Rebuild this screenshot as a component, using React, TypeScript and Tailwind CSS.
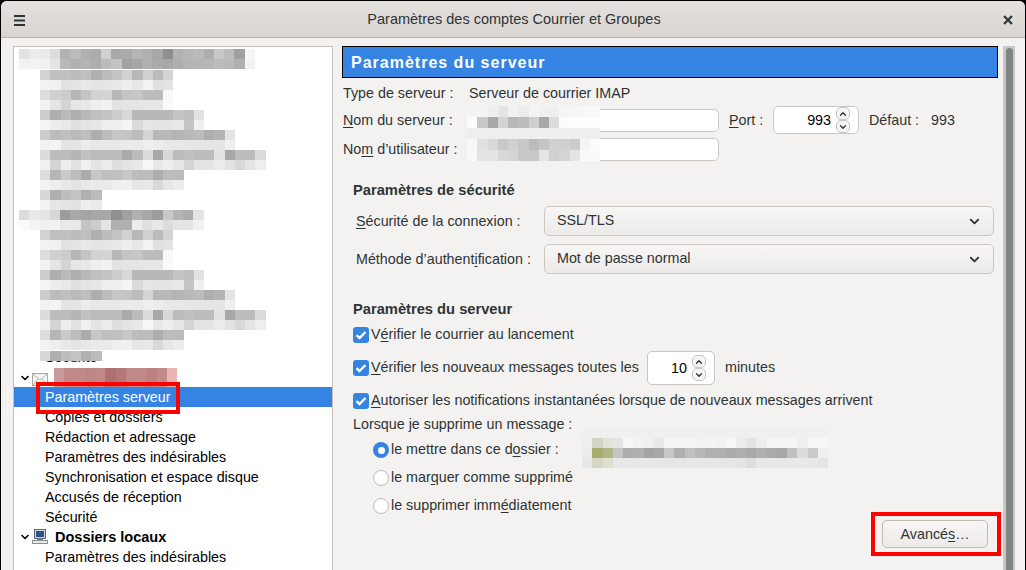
import React from 'react';
import { ChevronDown, ChevronUp } from 'lucide-react';

// pixelated (blurred out) parts of the screenshot, one grey per cell
const ROW_0 = ['e2eceadcb2bbb0add0a8aab4b0a88fb2b6baadc8bca0f6', 'f2f3f1e4b8b2b4aebcc4a2a6b0aaa8aeb4b6b6bcbab0f2'];
const ROW_1 = ['d2c0c0bcc0b0bcc4d2b8d0bcd4', 'f2f0e2e4e8e4e6e8eee8f2e0e4'];
const ROW_2 = ['dcd0ccb6c4d2d4b8c4c6bcbcf8', 'f2e4d4e6e8eef2e2e4e4e6e6fa'];
const ROW_3 = ['ccaebaaeb8c0c4ccd8b8b8b8b8c4c0e2', 'f4ece8e0e4e6eeeef4dae6e4e4e8c4f0'];
const ROW_4 = ['ccbcc0babeaebcc6c4bcd4b8b8b4b8bcaeb4e4', 'f2f4e4e4ece8e8e8eaeaeeece8e8e6e6e4e4f0'];
const ROW_5 = ['dcbcbcb6c2bcbcbcaabcdca8d8bcc0bcbce2a8bcbcdc', 'f0d4eee2f0e4ecdee4e8f6e8eee6d4e4e4ece2d8e4ee'];
const ROW_6 = ['dcb6cabcacc6c0c0c8bcbcaebcbc', 'f2eee8e4e8eaeaeef0e6e8d8e6ec'];
const ROW_7 = ['d8b0bec4b0bc', 'f2e6e4e2eeea'];
const ROW_8 = ['dce8e4d89ca8a4a8a890a0b0a89cc8b4ace4', 'faf4f0f2eae8c4cce4b0b0ece0e8dce4e4f2'];

const SERVER_CELLS = [
  'f4f4eee4f2ecf4f0eef6f6f8f8',
  'fcc8a8d4b8bcd0a8dcfcfefefe',
  'eeeeeeeeeeeeeeeeeeeeeeeeee',
  'f8e0d8c8d0c8bcc4d0d0ccf4fc',
  'f8e4e4d8d4c8c8e4d0d4e4f8fa',
];

const FOLDER_CELLS = [
  'f0f0f0f0f0f0f0f0f0f0f0f0f0f0f0f0f0f0f0f0f0f0f0f0',
  'eed4e2e4f6f2f0e8f5f5f5f2f4f2f6ece4eef5f5f5eef6f6',
  'eca8acc4acb0a4a8c8b0c0b8b0b0aaaeaab0aaa8c0dccaee',
  'e8d8e0e8e8e8e8e6e6e6e6e6e6e6e6e4dee8e8e8e8e8e8e4',
];

// the only coloured cells of the folder name
const FOLDER_TINTS: Record<string, string> = {
  '1-1': '#d2d4c4',
  '1-2': '#e2e4d6',
  '2-1': '#a8ac6c',
  '2-2': '#b4b48c',
  '3-1': '#d6d6c4',
  '3-2': '#e0dfd0',
};

const ACCOUNT_REDS = ['#c99a9a', '#c08888', '#c08a8a', '#bd8585', '#c08888', '#b07070', '#b57878', '#c08888', '#c08a8a', '#be8080', '#c48a8a', '#ecb4b4'];

const greys = (row: string) => (row.match(/../g) ?? []).map((g) => `#${g}${g}${g}`);

const Cells = ({ colors, cell = 'h-[10px]' }: { colors: string[]; cell?: string }) => (
  <div className="flex">
    {colors.map((color, i) => (
      <div key={i} className={`w-[10.25px] ${cell}`} style={{ background: color }} />
    ))}
  </div>
);

const Blurred = ({ rows, indent }: { rows: string[]; indent: boolean }) => (
  <div className={indent ? 'h-5 pt-[3px] pl-[26px]' : 'h-5 pt-[3px] pl-[5px]'}>
    {rows.map((row, i) => (
      <Cells key={i} colors={greys(row)} />
    ))}
  </div>
);

const Key = ({ children }: { children: React.ReactNode }) => (
  <span className="underline underline-offset-2 decoration-1">{children}</span>
);

const TreeRow = ({ children, selected }: { children: React.ReactNode; selected?: boolean }) => (
  <div className={selected ? 'h-5 pl-[31px] leading-5 bg-[#3584e4] text-white' : 'h-5 pl-[31px] leading-5 text-black'}>
    {children}
  </div>
);

const Stepper = ({ value, className }: { value: string; className: string }) => (
  <div className={`flex items-center justify-end rounded-[5px] border border-[#c9c5bf] bg-white ${className}`}>
    <span className="pt-[2px] text-black">{value}</span>
    <div className="ml-[5px] mr-2 flex flex-col">
      <div className="flex h-[13px] w-[14px] items-center justify-center rounded-[5px] border border-[#c9c5bf] bg-[#f6f5f4]">
        <ChevronUp size={10} strokeWidth={3} className="text-[#2e3436]" />
      </div>
      <div className="flex h-[13px] w-[14px] items-center justify-center rounded-[5px] border border-[#c9c5bf] bg-[#f6f5f4]">
        <ChevronDown size={10} strokeWidth={3} className="text-[#2e3436]" />
      </div>
    </div>
  </div>
);

const Check = () => (
  <div className="flex h-4 w-4 shrink-0 items-center justify-center rounded-[3px] bg-[#3584e4]">
    <svg width="12" height="10" viewBox="0 0 12 10">
      <path d="M1.5 5.2 L4.5 8 L10.5 2" fill="none" stroke="white" strokeWidth="2.4" />
    </svg>
  </div>
);

const Radio = ({ on }: { on?: boolean }) =>
  on ? (
    <div className="flex h-4 w-4 shrink-0 items-center justify-center rounded-full bg-[#3584e4]">
      <div className="h-[7px] w-[7px] rounded-full bg-white" />
    </div>
  ) : (
    <div className="h-4 w-4 shrink-0 rounded-full border border-[#c2bdb7] bg-white" />
  );

const Dropdown = ({ value }: { value: string }) => (
  <div className="flex h-[30px] w-[450px] items-center justify-between rounded-[5px] border border-[#cdc7c2] bg-gradient-to-b from-[#f7f6f5] to-[#edebe9] pl-3 pr-[11px]">
    <span>{value}</span>
    <ChevronDown size={15} strokeWidth={3} className="text-[#2e3436]" />
  </div>
);

const MailIcon = () => (
  <svg width="16" height="13" viewBox="0 0 16 13">
    <rect x="0.5" y="0.5" width="15" height="12" fill="#f4f4f2" stroke="#a8a8a4" />
    <path d="M1 1 L8 7 L15 1 M1 12 L6 6 M15 12 L10 6" fill="none" stroke="#b4b4b0" />
  </svg>
);

const ComputerIcon = () => (
  <svg width="16" height="16" viewBox="0 0 16 16">
    <rect x="2.5" y="0.5" width="11" height="9" fill="#d6d8d6" stroke="#5f6a6e" />
    <rect x="4" y="2" width="8" height="6" fill="#2f4f8f" />
    <rect x="0.5" y="11.5" width="15" height="3" fill="#e8e8e6" stroke="#8a8f90" />
    <rect x="5" y="10" width="6" height="1" fill="#7d8487" />
  </svg>
);

export default function App() {
  return (
    <div className="h-[570px] w-[1026px] overflow-hidden bg-black pl-px pt-px text-[14.3px] text-[#2e3436] [font-family:'Liberation_Sans',Arial,sans-serif]">
      <div className="relative h-[569px] w-[1024px] overflow-hidden rounded-t-[6px] bg-[#f4f2f0]">
        <div className="flex h-[37px] items-center justify-between border-b border-[#b6b2ab] bg-gradient-to-b from-[#e4e1de] to-[#d9d5d1] pl-[13px] pr-[12px] pt-[2px]">
          <svg width="11" height="11" viewBox="0 0 11 11">
            <path d="M0 1 H11 M0 5.5 H11 M0 10 H11" stroke="#2e3436" strokeWidth="2" />
          </svg>
          <span className="text-[14.5px] text-[#2e3436]">Paramètres des comptes Courrier et Groupes</span>
          <svg width="10" height="10" viewBox="0 0 10 10">
            <path d="M1 1 L9 9 M9 1 L1 9" stroke="#2e3436" strokeWidth="2.2" />
          </svg>
        </div>

        <div className="flex pl-3 pt-[8px]">
          <div className="h-[530px] w-[320px] shrink-0 border border-[#c5c1ba] bg-white">
            <div className="h-5 pl-[5px] pt-[2px]">
              {ROW_0.map((row, i) => (
                <Cells key={i} colors={greys(row)} />
              ))}
            </div>
            <Blurred rows={ROW_1} indent />
            <Blurred rows={ROW_2} indent />
            <Blurred rows={ROW_3} indent />
            <Blurred rows={ROW_4} indent />
            <Blurred rows={ROW_5} indent />
            <Blurred rows={ROW_6} indent />
            <Blurred rows={ROW_7} indent />
            <Blurred rows={ROW_8} indent={false} />
            <Blurred rows={ROW_1} indent />
            <Blurred rows={ROW_2} indent />
            <Blurred rows={ROW_3} indent />
            <Blurred rows={ROW_4} indent />
            <Blurred rows={ROW_5} indent />
            <Blurred rows={ROW_6} indent />
            <div className="relative">
              <TreeRow>Sécurité</TreeRow>
              <div className="absolute left-[26px] top-[4px]">
                <Cells colors={greys(ROW_7[0])} />
              </div>
            </div>
            <div className="flex h-5 items-center pl-[5px]">
              <ChevronDown size={12} strokeWidth={3.2} className="mt-[1px] text-black" />
              <div className="ml-[1px] mr-[6px] mt-[4px]">
                <MailIcon />
              </div>
              <div className="self-end">
                <Cells colors={ACCOUNT_REDS} cell="h-[19px]" />
              </div>
            </div>
            <TreeRow selected>Paramètres serveur</TreeRow>
            <TreeRow>Copies et dossiers</TreeRow>
            <TreeRow>Rédaction et adressage</TreeRow>
            <TreeRow>Paramètres des indésirables</TreeRow>
            <TreeRow>Synchronisation et espace disque</TreeRow>
            <TreeRow>Accusés de réception</TreeRow>
            <TreeRow>Sécurité</TreeRow>
            <div className="flex h-5 items-center pl-[5px] text-[14.5px] font-bold text-black">
              <ChevronDown size={12} strokeWidth={3.2} />
              <div className="ml-[1px] mr-[7px]">
                <ComputerIcon />
              </div>
              <span className="pt-px">Dossiers locaux</span>
            </div>
            <TreeRow>Paramètres des indésirables</TreeRow>
          </div>

          <div className="ml-[9px] w-[656px] shrink-0">
            <div className="flex h-8 items-center border border-black bg-[#3584e4] pl-2 pt-px text-[16px] font-bold tracking-[1px] text-white">
              Paramètres du serveur
            </div>
            <div className="flex h-[28px] items-center pl-px pt-[4px]">
              <span className="w-[126px]">Type de serveur :</span>
              <span>Serveur de courrier IMAP</span>
            </div>
            <div className="flex h-[28px] items-center pl-px">
              <span className="w-[124px] pt-[2px]">
                <Key>N</Key>om du serveur :
              </span>
              <div className="h-[23px] w-[252px] rounded-[5px] border border-[#cdc7c2] bg-white" />
              <span className="ml-[10px] w-[44px] pt-[2px]">
                <Key>P</Key>ort :
              </span>
              <Stepper value="993" className="h-[28px] w-[86px]" />
              <span className="ml-[10px] w-[62px] pt-[2px]">Défaut :</span>
              <span className="pt-[2px]">993</span>
            </div>
            <div className="flex h-[30px] items-center pl-px">
              <span className="w-[124px] pt-[2px]">
                No<Key>m</Key> d’utilisateur :
              </span>
              <div className="h-[23px] w-[252px] rounded-[5px] border border-[#cdc7c2] bg-white" />
            </div>

            <div className="mt-[15px] pl-[11px] text-[14.7px] font-bold">Paramètres de sécurité</div>
            <div className="mt-[5px] flex h-[30px] items-center pl-[14px] pt-[2px]">
              <span className="w-[188px]">
                <Key>S</Key>écurité de la connexion :
              </span>
              <div className="-mt-[2px]">
                <Dropdown value="SSL/TLS" />
              </div>
            </div>
            <div className="mt-2 flex h-[30px] items-center pl-[14px] pt-[2px]">
              <span className="w-[188px]">
                Méthode d’authent<Key>i</Key>fication :
              </span>
              <div className="-mt-[2px]">
                <Dropdown value="Mot de passe normal" />
              </div>
            </div>

            <div className="mt-6 pl-[11px] text-[14.7px] font-bold">Paramètres du serveur</div>
            <div className="mt-[7px] flex h-4 items-center pl-[11px]">
              <Check />
              <span className="ml-[2px]">
                V<Key>é</Key>rifier le courrier au lancement
              </span>
            </div>
            <div className="mt-2 flex h-[34px] items-center pl-[11px]">
              <Check />
              <span className="ml-[2px] w-[276px]">
                <Key>V</Key>érifier les nouveaux messages toutes les
              </span>
              <Stepper value="10" className="h-[34px] w-[68px]" />
              <span className="ml-[10px]">minutes</span>
            </div>
            <div className="mt-2 flex h-4 items-center pl-[11px]">
              <Check />
              <span className="ml-[2px]">
                <Key>A</Key>utoriser les notifications instantanées lorsque de nouveaux messages arrivent
              </span>
            </div>
            <div className="mt-[7px] h-[17px] pl-[11px] leading-[17px]">Lorsque je supprime un message :</div>
            <div className="mt-[9px] flex h-4 items-center pl-[31px]">
              <Radio on />
              <span className="ml-[2px]">
                le mettre dans ce d<Key>o</Key>ssier :
              </span>
            </div>
            <div className="mt-3 flex h-4 items-center pl-[31px]">
              <Radio />
              <span className="ml-[2px]">
                le mar<Key>q</Key>uer comme supprimé
              </span>
            </div>
            <div className="mt-3 flex h-4 items-center pl-[31px]">
              <Radio />
              <span className="ml-[2px]">
                le supprimer imm<Key>é</Key>diatement
              </span>
            </div>
            <div className="mt-[6px] flex justify-end pr-[10px]">
              <div className="flex h-[28px] w-[106px] items-center justify-center rounded-[5px] border border-[#c0bbb4] bg-gradient-to-b from-[#f7f6f5] to-[#edebe9] pt-[2px]">
                Avancé<Key>s</Key>…
              </div>
            </div>
          </div>

          <div className="ml-[5px] flex h-[530px] w-3 shrink-0 justify-center bg-[#c9c7c3] pt-[2px]">
            <div className="h-full w-[7px] rounded-t-full bg-[#808484]" />
          </div>
        </div>

        {/* blurred values and red marks lie over the form */}
        <div className="absolute left-[466px] top-[105px]">
          {SERVER_CELLS.map((row, i) => (
            <Cells key={i} colors={greys(row)} cell="h-[11px]" />
          ))}
        </div>
        <div className="absolute left-[581px] top-[427px]">
          {FOLDER_CELLS.map((row, i) => (
            <Cells key={i} colors={greys(row).map((grey, j) => FOLDER_TINTS[`${i}-${j}`] ?? grey)} />
          ))}
        </div>
        <div className="absolute left-[35px] top-[381px] h-[32px] w-[144px] border-4 border-[#ff0000]" />
        <div className="absolute left-[870px] top-[511px] h-[44px] w-[130px] border-4 border-[#ff0000]" />
      </div>
    </div>
  );
}
